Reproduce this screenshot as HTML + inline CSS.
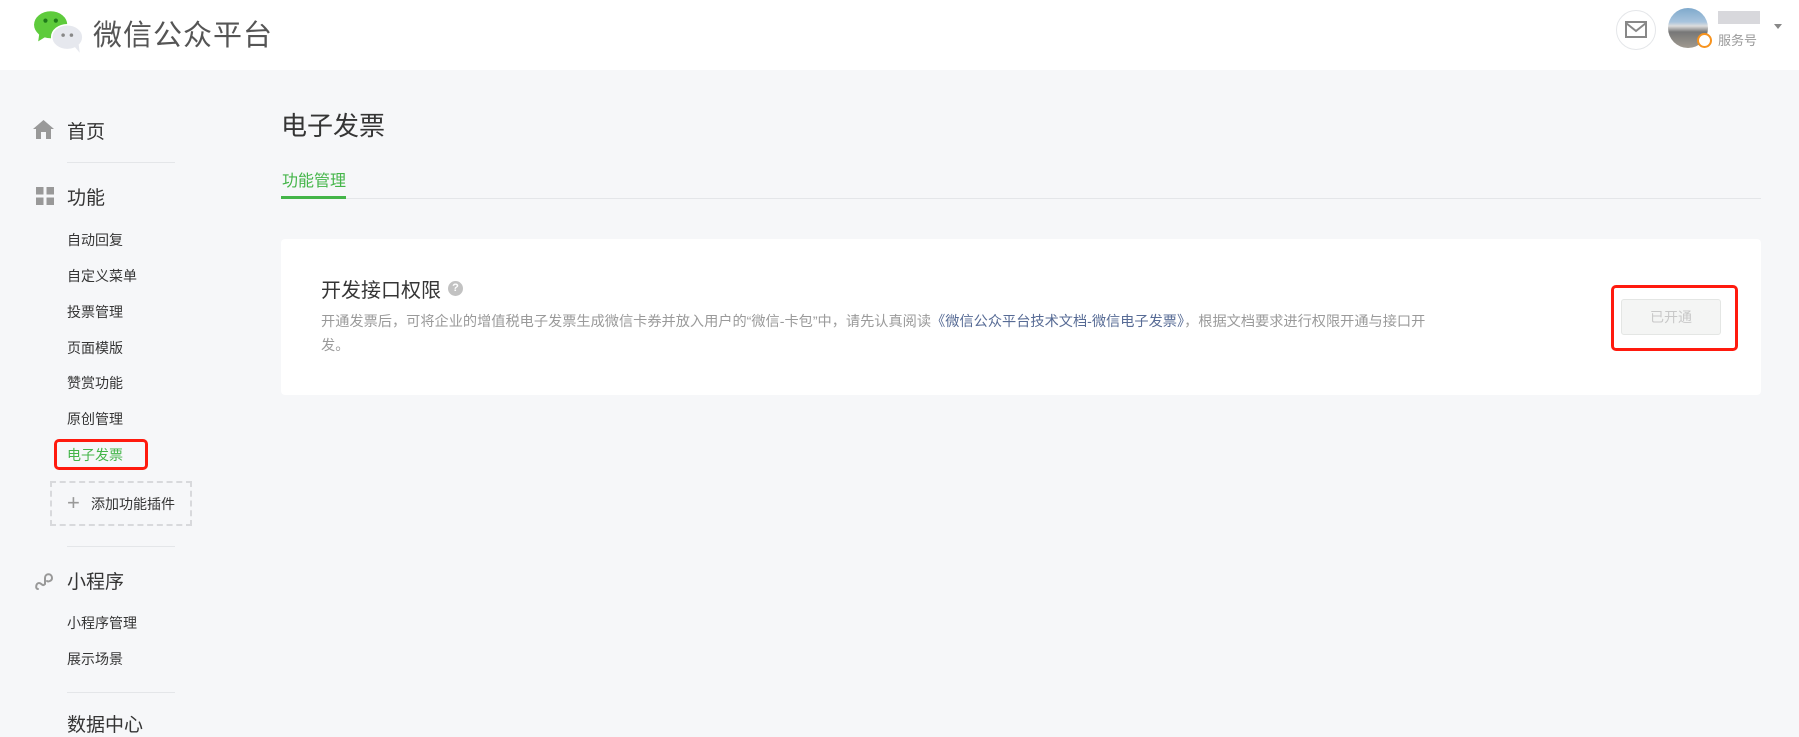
<!DOCTYPE html>
<html><head><meta charset="utf-8"><style>
*{margin:0;padding:0;box-sizing:border-box}
body{width:1799px;height:718px;overflow:hidden;background:#f6f7f9;font-family:"Liberation Sans","Noto Sans CJK SC",sans-serif;color:#353535;position:relative}
.a{position:absolute;white-space:nowrap}
.hd{position:absolute;left:0;top:0;width:1799px;height:70px;background:#fff}
.sub{position:absolute;left:67px;font-size:14px;color:#353535;line-height:20px}
.div{position:absolute;left:67px;width:108px;height:1px;background:#e4e6e9}
</style></head><body>
<div class="hd">
<svg class="a" style="left:33px;top:9px" width="54" height="44" viewBox="0 0 52 42">
<ellipse cx="17" cy="15" rx="16" ry="13" fill="#5ecb3c"/><path d="M6 24 L5 31 L13 26Z" fill="#5ecb3c"/>
<circle cx="12" cy="11" r="2" fill="#1f7a1a"/><circle cx="22" cy="11" r="2" fill="#1f7a1a"/>
<ellipse cx="33" cy="27" rx="15" ry="12" fill="#e6e8ee" stroke="#fff" stroke-width="1.5"/><path d="M40 36 L45 42 L44 34Z" fill="#e6e8ee"/>
<circle cx="29" cy="25" r="1.7" fill="#888"/><circle cx="37" cy="25" r="1.7" fill="#888"/></svg>
<div class="a" style="left:93px;top:12px;font-size:29px;color:#555;letter-spacing:1px">微信公众平台</div>
<div class="a" style="left:1616px;top:10px;width:40px;height:40px;border:1px solid #e4e6e9;border-radius:50%"></div>
<svg class="a" style="left:1625px;top:21px" width="22" height="17" viewBox="0 0 22 17"><rect x="1" y="1" width="20" height="15" fill="none" stroke="#888" stroke-width="2"/><path d="M1 2 L11 10 L21 2" fill="none" stroke="#888" stroke-width="2"/></svg>
<div class="a" style="left:1668px;top:8px;width:40px;height:40px;border-radius:50%;background:linear-gradient(#7fa9cc 0,#a8c4dd 35%,#ddd 45%,#777 60%,#a09a90 100%)"></div>
<div class="a" style="left:1697px;top:33px;width:15px;height:15px;border-radius:50%;background:#fff;border:2px solid #f7931e"></div>
<div class="a" style="left:1718px;top:11px;width:42px;height:13px;background:#d8d8dc"></div>
<div class="a" style="left:1718px;top:30px;font-size:13px;color:#999">服务号</div>
<div class="a" style="left:1774px;top:24px;border:4px solid transparent;border-top:5px solid #888"></div>
</div>

<svg class="a" style="left:33px;top:120px" width="21" height="19" viewBox="0 0 21 19"><path d="M10.5 0 L21 9 L18 9 L18 19 L13 19 L13 12 L8 12 L8 19 L3 19 L3 9 L0 9Z" fill="#999"/></svg>
<div class="a" style="left:67px;top:117px;font-size:19px">首页</div>
<div class="div" style="top:162px"></div>
<svg class="a" style="left:36px;top:187px" width="18" height="18"><rect width="7.5" height="7.5" fill="#999"/><rect x="10.5" width="7.5" height="7.5" fill="#999"/><rect y="10.5" width="7.5" height="7.5" fill="#999"/><rect x="10.5" y="10.5" width="7.5" height="7.5" fill="#999"/></svg>
<div class="a" style="left:67px;top:183px;font-size:19px">功能</div>
<div class="sub" style="top:230px">自动回复</div>
<div class="sub" style="top:266px">自定义菜单</div>
<div class="sub" style="top:302px">投票管理</div>
<div class="sub" style="top:338px">页面模版</div>
<div class="sub" style="top:373px">赞赏功能</div>
<div class="sub" style="top:409px">原创管理</div>
<div class="sub" style="top:445px;color:#44b549">电子发票</div>
<div class="a" style="left:54px;top:439px;width:94px;height:31px;border:3px solid #ff1a0e;border-radius:5px"></div>
<div class="a" style="left:50px;top:481px;width:142px;height:45px;border:2px dashed #d8d9dc"></div>
<div class="a" style="left:67px;top:493px;font-size:22px;color:#999;font-weight:300;line-height:20px">+</div>
<div class="a" style="left:91px;top:494px;font-size:14px">添加功能插件</div>
<div class="div" style="top:546px"></div>
<svg class="a" style="left:35px;top:571px" width="18" height="20" viewBox="0 0 18 20"><path d="M3 18 C0 18 1 12 4 12 C7 12 7 16 10 13 L10 7 C10 2 17 2 17 7 C17 10 13 11 12 10" fill="none" stroke="#999" stroke-width="2" stroke-linecap="round"/></svg>
<div class="a" style="left:67px;top:567px;font-size:19px">小程序</div>
<div class="sub" style="top:613px">小程序管理</div>
<div class="sub" style="top:649px">展示场景</div>
<div class="div" style="top:692px"></div>
<div class="a" style="left:67px;top:710px;font-size:19px;color:#353535">数据中心</div>

<div class="a" style="left:281px;top:106px;font-size:26px">电子发票</div>
<div class="a" style="left:282px;top:167px;font-size:16px;color:#44b549">功能管理</div>
<div class="a" style="left:281px;top:198px;width:1480px;height:1px;background:#e4e6e9"></div>
<div class="a" style="left:281px;top:196px;width:65px;height:3px;background:#44b549"></div>

<div class="a" style="left:281px;top:239px;width:1480px;height:156px;background:#fff;border-radius:4px"></div>
<div class="a" style="left:321px;top:274px;font-size:20px">开发接口权限</div>
<div class="a" style="left:448px;top:281px;width:15px;height:15px;border-radius:50%;background:#c2c2c2;color:#fff;font-size:11px;text-align:center;line-height:15px;font-weight:bold">?</div>
<div class="a" style="left:321px;top:310px;font-size:14.2px;color:#9a9a9a;line-height:24px">开通发票后，可将企业的增值税电子发票生成微信卡券并放入用户的“微信-卡包”中，请先认真阅读<span style="color:#576b95">《微信公众平台技术文档-微信电子发票》</span>，根据文档要求进行权限开通与接口开<br>发。</div>
<div class="a" style="left:1621px;top:299px;width:100px;height:36px;background:#f4f5f4;border:1px solid #e4e6e4;border-radius:3px;color:#c8c8c8;font-size:14px;text-align:center;line-height:34px">已开通</div>
<div class="a" style="left:1611px;top:285px;width:127px;height:66px;border:3px solid #ff1a0e;border-radius:5px"></div>
</body></html>
